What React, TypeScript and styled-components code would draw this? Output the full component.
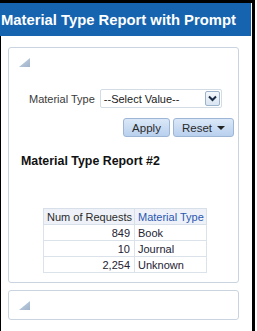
import React from "react";
import styled, { createGlobalStyle } from "styled-components";

const Global = createGlobalStyle`
  html, body { margin: 0; padding: 0; background: #ffffff; }
  body { width: 257px; height: 331px; overflow: hidden; }
`;

const FONT = `"Liberation Sans", Tahoma, Arial, sans-serif`;

const Frame = styled.div`
  width: 252px;
  height: 328px;
  border-top: 3px solid #000;
  position: relative;
  display: flex;
  flex-direction: column;
  font-family: ${FONT};
  &::after {
    content: "";
    position: absolute;
    top: -3px;
    right: -3px;
    width: 3px;
    height: 331px;
    background: #000;
  }
`;

const Header = styled.div`
  height: 33px;
  width: 251px;
  background: #1664b0;
  color: #ffffff;
  display: flex;
  align-items: center;
  overflow: hidden;
  white-space: nowrap;
`;

const HeaderTitle = styled.h1`
  margin: 0 0 0 1px;
  font-family: ${FONT};
  font-weight: bold;
  font-size: 14.8px;
`;

const Body = styled.div`
  flex: 1;
  border-left: 1px solid #000;
  padding: 11px 0 0 7px;
  display: flex;
  flex-direction: column;
  gap: 7px;
`;

const Panel = styled.section<{ $h: number }>`
  box-sizing: border-box;
  width: 231px;
  height: ${(p) => p.$h}px;
  border: 1px solid #c9d4e0;
  border-radius: 3px;
  padding: 10px 0 0 10px;
  display: flex;
  flex-direction: column;
  align-items: flex-start;
`;

const Collapse = styled.svg`
  display: block;
  width: 11px;
  height: 9px;
`;

const PromptRow = styled.div`
  display: flex;
  align-items: center;
  margin-top: 22px;
  margin-left: 10px;
  height: 19px;
`;

const Label = styled.span`
  font-size: 11px;
  color: #3a3a3a;
  margin-right: 5px;
`;

const Select = styled.div`
  box-sizing: border-box;
  width: 122px;
  height: 19px;
  border: 1px solid #d3dbe5;
  border-radius: 2px;
  background: #fff;
  display: flex;
  align-items: center;
  justify-content: space-between;
  padding: 0 1px 0 3px;
  font-size: 11px;
  color: #222;
`;

const SelectBtn = styled.span`
  box-sizing: border-box;
  width: 15px;
  height: 15px;
  border: 1px solid #9db3cc;
  border-radius: 2px;
  background: linear-gradient(#f4f8fc, #d9e5f2);
  display: flex;
  align-items: center;
  justify-content: center;
`;

const ButtonRow = styled.div`
  align-self: stretch;
  display: flex;
  justify-content: flex-end;
  gap: 3px;
  margin-top: 10px;
  margin-right: 4px;
`;

const Button = styled.button<{ $w: number }>`
  box-sizing: border-box;
  width: ${(p) => p.$w}px;
  height: 19px;
  border: 1px solid #9db6d6;
  border-radius: 3px;
  background: linear-gradient(#dbe8f8, #b9d0ee);
  font-family: ${FONT};
  font-size: 11.5px;
  color: #2a2a2a;
  padding: 0;
  display: flex;
  align-items: center;
  justify-content: center;
  gap: 5px;
`;

const Caret = styled.span`
  width: 0;
  height: 0;
  border-left: 4px solid transparent;
  border-right: 4px solid transparent;
  border-top: 4px solid #222;
`;

const ReportTitle = styled.h2`
  margin: 17px 0 0 2px;
  font-family: ${FONT};
  font-size: 12.4px;
  font-weight: bold;
  color: #111;
`;

const Table = styled.table`
  border-collapse: collapse;
  margin: 40px 0 0 24px;
  font-size: 11px;
  table-layout: fixed;
  width: 163px;
`;

const Th = styled.th<{ $blue?: boolean; $w: number }>`
  width: ${(p) => p.$w}px;
  height: 16px;
  box-sizing: border-box;
  padding: 0 3px;
  font-weight: normal;
  text-align: left;
  background: #eef2f8;
  border: 1px solid #d7dfe8;
  color: ${(p) => (p.$blue ? "#2a58b0" : "#2a2a2a")};
  white-space: nowrap;
`;

const Td = styled.td<{ $num?: boolean }>`
  height: 16px;
  box-sizing: border-box;
  padding: 0 4px 0 3px;
  text-align: ${(p) => (p.$num ? "right" : "left")};
  border: 1px solid #dbe2ea;
  color: #1e2233;
  white-space: nowrap;
`;

const Tri = () => (
  <Collapse viewBox="0 0 11 9">
    <defs>
      <linearGradient id="tg" x1="0" y1="0" x2="1" y2="1">
        <stop offset="0" stopColor="#c8d4e2" />
        <stop offset="1" stopColor="#9fb3ca" />
      </linearGradient>
    </defs>
    <polygon points="0,9 11,0 11,9" fill="url(#tg)" />
  </Collapse>
);

const rows = [
  ["849", "Book"],
  ["10", "Journal"],
  ["2,254", "Unknown"],
];

export default function App() {
  return (
    <>
      <Global />
      <Frame>
        <Header>
          <HeaderTitle>Material Type Report with Prompt</HeaderTitle>
        </Header>
        <Body>
          <Panel $h={236}>
            <Tri />
            <PromptRow>
              <Label>Material Type</Label>
              <Select>
                <span>--Select Value--</span>
                <SelectBtn>
                  <svg width="9" height="7" viewBox="0 0 9 7">
                    <polyline points="1,1.5 4.5,5 8,1.5" fill="none" stroke="#1b2a44" strokeWidth="2" />
                  </svg>
                </SelectBtn>
              </Select>
            </PromptRow>
            <ButtonRow>
              <Button $w={47}>Apply</Button>
              <Button $w={61}>
                Reset <Caret />
              </Button>
            </ButtonRow>
            <ReportTitle>Material Type Report #2</ReportTitle>
            <Table>
              <thead>
                <tr>
                  <Th $w={91}>Num of Requests</Th>
                  <Th $blue $w={72}>Material Type</Th>
                </tr>
              </thead>
              <tbody>
                {rows.map(([n, t]) => (
                  <tr key={t}>
                    <Td $num>{n}</Td>
                    <Td>{t}</Td>
                  </tr>
                ))}
              </tbody>
            </Table>
          </Panel>
          <Panel $h={30}>
            <Tri />
          </Panel>
        </Body>
      </Frame>
    </>
  );
}
